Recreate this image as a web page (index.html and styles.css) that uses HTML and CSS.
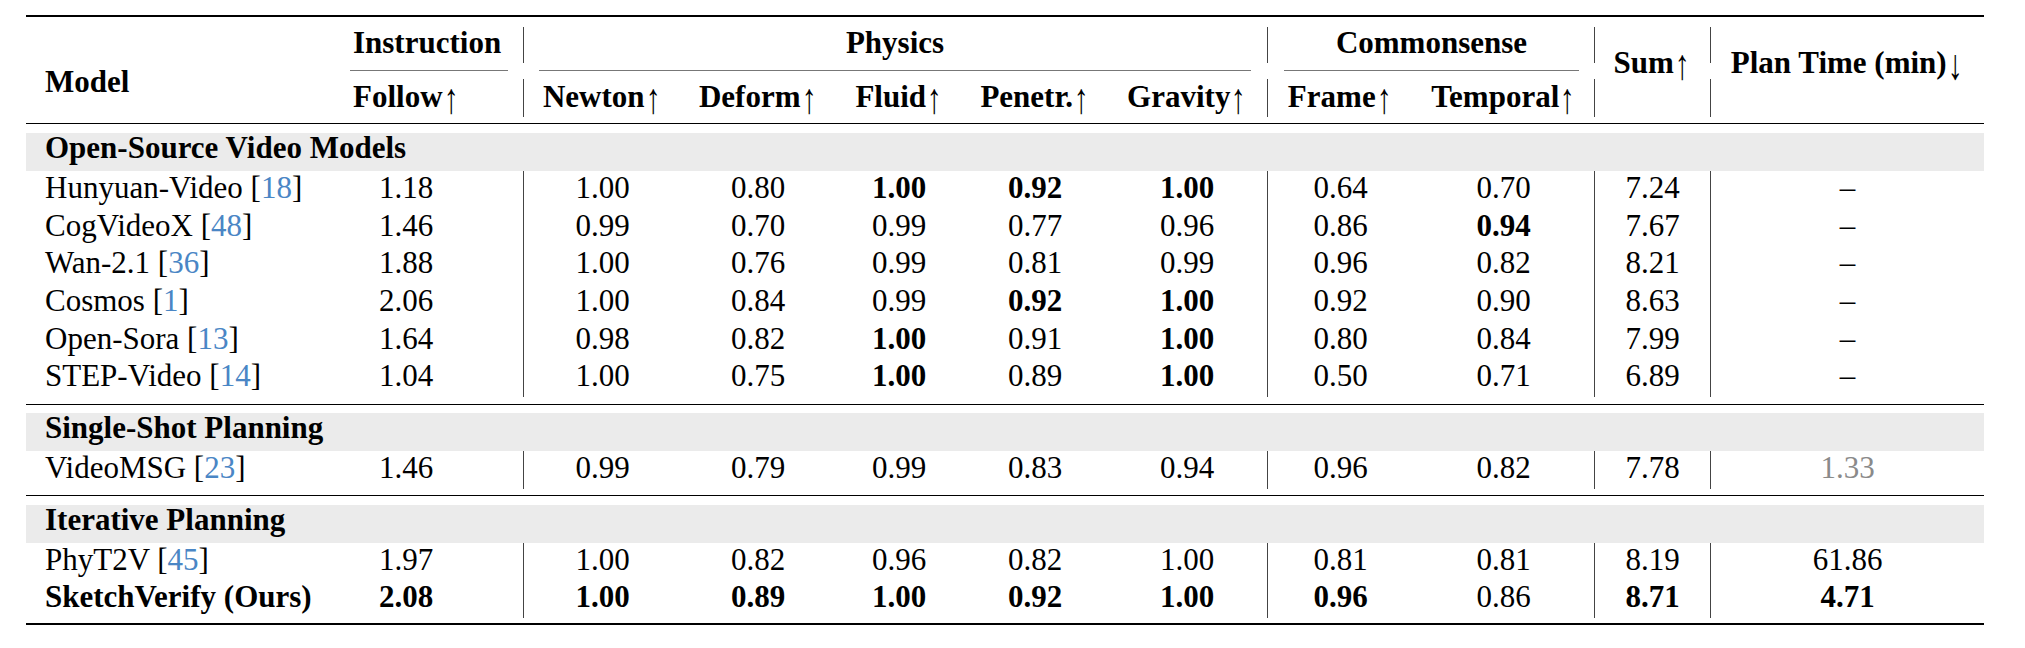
FILE: index.html
```html
<!DOCTYPE html>
<html lang="en">
<head>
<meta charset="utf-8">
<title>Results table</title>
<link rel="stylesheet" href="styles.css">
</head>
<body>
<div class="table">
  <div class="head">
    <div class="h model">Model</div>
    <div class="h grp instr"><div class="grp-in">Instruction</div></div>
    <div class="h grp phys hsep1"><div class="grp-in center">Physics</div></div>
    <div class="h grp comm hsep1"><div class="grp-in center">Commonsense</div></div>
    <div class="h sum hsep2">Sum<span class="arr">↑</span></div>
    <div class="h plan hsep2">Plan Time (min)<span class="arr">↓</span></div>
    <div class="h sub follow">Follow<span class="arr">↑</span></div>
    <div class="h sub hsep3">Newton<span class="arr">↑</span></div>
    <div class="h sub">Deform<span class="arr">↑</span></div>
    <div class="h sub">Fluid<span class="arr">↑</span></div>
    <div class="h sub">Penetr.<span class="arr">↑</span></div>
    <div class="h sub">Gravity<span class="arr">↑</span></div>
    <div class="h sub hsep3">Frame<span class="arr">↑</span></div>
    <div class="h sub">Temporal<span class="arr">↑</span></div>
  </div>

  <div class="section s1">
    <div class="band">Open-Source Video Models</div>
    <div class="row"><div class="c name">Hunyuan-Video [<span class="ref">18</span>]</div><div class="c f">1.18</div><div class="c sep">1.00</div><div class="c">0.80</div><div class="c"><b>1.00</b></div><div class="c"><b>0.92</b></div><div class="c"><b>1.00</b></div><div class="c sep">0.64</div><div class="c">0.70</div><div class="c sep">7.24</div><div class="c sep">–</div></div>
    <div class="row"><div class="c name">CogVideoX [<span class="ref">48</span>]</div><div class="c f">1.46</div><div class="c sep">0.99</div><div class="c">0.70</div><div class="c">0.99</div><div class="c">0.77</div><div class="c">0.96</div><div class="c sep">0.86</div><div class="c"><b>0.94</b></div><div class="c sep">7.67</div><div class="c sep">–</div></div>
    <div class="row"><div class="c name">Wan-2.1 [<span class="ref">36</span>]</div><div class="c f">1.88</div><div class="c sep">1.00</div><div class="c">0.76</div><div class="c">0.99</div><div class="c">0.81</div><div class="c">0.99</div><div class="c sep">0.96</div><div class="c">0.82</div><div class="c sep">8.21</div><div class="c sep">–</div></div>
    <div class="row"><div class="c name">Cosmos [<span class="ref">1</span>]</div><div class="c f">2.06</div><div class="c sep">1.00</div><div class="c">0.84</div><div class="c">0.99</div><div class="c"><b>0.92</b></div><div class="c"><b>1.00</b></div><div class="c sep">0.92</div><div class="c">0.90</div><div class="c sep">8.63</div><div class="c sep">–</div></div>
    <div class="row"><div class="c name">Open-Sora [<span class="ref">13</span>]</div><div class="c f">1.64</div><div class="c sep">0.98</div><div class="c">0.82</div><div class="c"><b>1.00</b></div><div class="c">0.91</div><div class="c"><b>1.00</b></div><div class="c sep">0.80</div><div class="c">0.84</div><div class="c sep">7.99</div><div class="c sep">–</div></div>
    <div class="row"><div class="c name">STEP-Video [<span class="ref">14</span>]</div><div class="c f">1.04</div><div class="c sep">1.00</div><div class="c">0.75</div><div class="c"><b>1.00</b></div><div class="c">0.89</div><div class="c"><b>1.00</b></div><div class="c sep">0.50</div><div class="c">0.71</div><div class="c sep">6.89</div><div class="c sep">–</div></div>
  </div>

  <div class="section s2">
    <div class="band">Single-Shot Planning</div>
    <div class="row"><div class="c name">VideoMSG [<span class="ref">23</span>]</div><div class="c f">1.46</div><div class="c sep">0.99</div><div class="c">0.79</div><div class="c">0.99</div><div class="c">0.83</div><div class="c">0.94</div><div class="c sep">0.96</div><div class="c">0.82</div><div class="c sep">7.78</div><div class="c sep muted">1.33</div></div>
  </div>

  <div class="section s3">
    <div class="band">Iterative Planning</div>
    <div class="row"><div class="c name">PhyT2V [<span class="ref">45</span>]</div><div class="c f">1.97</div><div class="c sep">1.00</div><div class="c">0.82</div><div class="c">0.96</div><div class="c">0.82</div><div class="c">1.00</div><div class="c sep">0.81</div><div class="c">0.81</div><div class="c sep">8.19</div><div class="c sep">61.86</div></div>
    <div class="row"><div class="c name"><b>SketchVerify (Ours)</b></div><div class="c f"><b>2.08</b></div><div class="c sep"><b>1.00</b></div><div class="c"><b>0.89</b></div><div class="c"><b>1.00</b></div><div class="c"><b>0.92</b></div><div class="c"><b>1.00</b></div><div class="c sep"><b>0.96</b></div><div class="c">0.86</div><div class="c sep"><b>8.71</b></div><div class="c sep"><b>4.71</b></div></div>
  </div>
</div>
</body>
</html>
```

FILE: styles.css
```css
:root {
  --cols: 309px 188px 158px 154px 128px 144px 160px 146px 181px 116px 274px;
}

html, body {
  margin: 0;
  padding: 0;
  background: #fff;
}

body {
  font-family: "Liberation Serif", "Times New Roman", serif;
  font-size: 31px;
  color: #000;
}

.table {
  width: 1958px;
  margin: 15px 0 0 26px;
  border-top: 2px solid #000;
  border-bottom: 2px solid #000;
}

/* ---------- header ---------- */
.head {
  display: grid;
  grid-template-columns: var(--cols);
  grid-template-rows: 54px 52px;
  border-bottom: 1px solid #000;
  font-weight: bold;
  line-height: 34px;
  white-space: nowrap;
}

.h {
  box-sizing: border-box;
  text-align: center;
}

.arr {
  display: inline-block;
  font-weight: normal;
  font-size: 33px;
  transform: scale(0.9, 1.3);
  transform-origin: 50% 8px;
}

.model {
  grid-column: 1;
  grid-row: 1 / span 2;
  text-align: left;
  padding: 47.5px 0 0 19px;
}

.grp {
  grid-row: 1;
}

.instr { grid-column: 2; }
.phys { grid-column: 3 / span 5; }
.comm { grid-column: 8 / span 2; }

.grp-in {
  box-sizing: border-box;
  height: 54px;
  margin: 0 15px;
  padding-top: 8.5px;
  border-bottom: 1px solid #777;
  text-align: left;
  padding-left: 3px;
}

.phys .grp-in { margin: 0 16px; }
.comm .grp-in { margin: 0 15px 0 17px; }

.grp-in.center {
  text-align: center;
  padding-left: 0;
}

.sum {
  grid-column: 10;
  grid-row: 1 / span 2;
  padding-top: 27.5px;
}

.plan {
  grid-column: 11;
  grid-row: 1 / span 2;
  padding-top: 27.5px;
}

.sub {
  grid-row: 2;
  padding-top: 7.5px;
}

.follow {
  grid-column: 2;
  text-align: left;
  padding-left: 18px;
}

/* broken vertical separators in the header */
.hsep1 {
  background: linear-gradient(#444, #444) 0 10px / 1px 36px no-repeat;
}

.hsep2 {
  background:
    linear-gradient(#444, #444) 0 10px / 1px 36px no-repeat,
    linear-gradient(#444, #444) 0 62px / 1px 38px no-repeat;
}

.hsep3 {
  background: linear-gradient(#444, #444) 0 8px / 1px 38px no-repeat;
}

/* ---------- body sections ---------- */
.section {
  border-bottom: 1px solid #000;
}

.s1 { padding: 9px 0 7px; }
.s2 { padding: 8px 0 6px; }
.s3 { padding: 9px 0 5px; border-bottom: none; }

.band {
  height: 38px;
  background: #ebebeb;
  font-weight: bold;
  line-height: 30px;
  padding-left: 19px;
  white-space: nowrap;
}

.row {
  display: grid;
  grid-template-columns: var(--cols);
  height: 37.67px;
  line-height: 34px;
  white-space: nowrap;
}

.c {
  box-sizing: border-box;
  text-align: center;
}

.c.name {
  text-align: left;
  padding-left: 19px;
}

.c.f {
  padding-right: 46px;
}

.c.sep {
  border-left: 1px solid #444;
}

.ref {
  color: #4a86c5;
}

.muted {
  color: #8a8a8a;
}

b {
  font-weight: bold;
}
```
